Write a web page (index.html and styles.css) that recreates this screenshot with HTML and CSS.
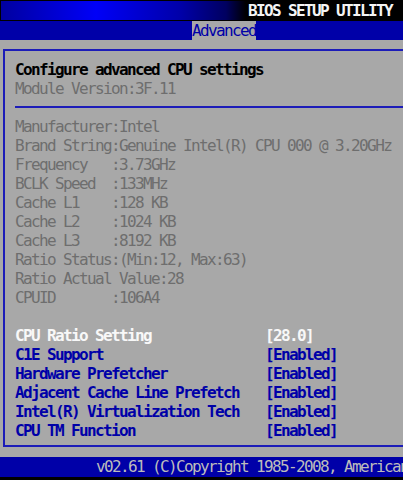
FILE: index.html
```html
<!DOCTYPE html>
<html lang="en">
<head>
  <meta charset="UTF-8" />
  <meta name="viewport" content="width=device-width, initial-scale=1.0"/>
  <title>BIOS Setup Utility – Advanced</title>
  <link rel="stylesheet" href="styles.css">
</head>
<body>

  <header class="title-bar">
    <span class="title">BIOS SETUP UTILITY</span>
  </header>

  <nav class="menu-bar">
    <span class="tab active">Advanced</span>
  </nav>

  <main class="content">
    <section class="panel">
      <div class="line heading">Configure advanced CPU settings</div>
      <div class="line info">Module Version:3F.11</div>

      <div class="divider"></div>

      <div class="line info">Manufacturer:Intel</div>
      <div class="line info">Brand String:Genuine Intel(R) CPU 000 @ 3.20GHz</div>
      <div class="line info">Frequency   :3.73GHz</div>
      <div class="line info">BCLK Speed  :133MHz</div>
      <div class="line info">Cache L1    :128 KB</div>
      <div class="line info">Cache L2    :1024 KB</div>
      <div class="line info">Cache L3    :8192 KB</div>
      <div class="line info">Ratio Status:(Min:12, Max:63)</div>
      <div class="line info">Ratio Actual Value:28</div>
      <div class="line info">CPUID       :106A4</div>

      <div class="spacer"></div>

      <div class="line setting selected">
        <span class="label">CPU Ratio Setting</span>
        <span class="value">[28.0]</span>
      </div>
      <div class="line setting">
        <span class="label">C1E Support</span>
        <span class="value">[Enabled]</span>
      </div>
      <div class="line setting">
        <span class="label">Hardware Prefetcher</span>
        <span class="value">[Enabled]</span>
      </div>
      <div class="line setting">
        <span class="label">Adjacent Cache Line Prefetch</span>
        <span class="value">[Enabled]</span>
      </div>
      <div class="line setting">
        <span class="label">Intel(R) Virtualization Tech</span>
        <span class="value">[Enabled]</span>
      </div>
      <div class="line setting">
        <span class="label">CPU TM Function</span>
        <span class="value">[Enabled]</span>
      </div>
    </section>
  </main>

  <footer class="status-bar">v02.61 (C)Copyright 1985-2008, American</footer>

</body>
</html>
```

FILE: styles.css
```css
body {
  margin: 0;
  width: 403px;
  height: 480px;
  overflow: hidden;
  display: flex;
  flex-direction: column;
  background: #000;
  font-family: 'DejaVu Sans Mono', 'Liberation Mono', monospace;
  font-size: 16px;
  line-height: 19px;
  letter-spacing: -1.63px;
}

.title-bar {
  height: 19px;
  border: 1px solid #000;
  border-right: none;
  display: flex;
  justify-content: flex-end;
  padding-right: 11px;
  background: linear-gradient(90deg, #0000a0 0px, #0000f8 95px, #0000a8 180px, #000060 225px, #000 245px);
}

.title {
  color: #f4f4f4;
  font-weight: bold;
}

.menu-bar {
  height: 19px;
  background: #0000a8;
  padding-left: 192px;
}

.tab {
  display: inline-block;
  width: 64px;
  height: 19px;
  color: #0000a8;
}

.tab.active {
  background: #a8a8a8;
}

.content {
  flex: 1;
  background: #a8a8a8;
  padding-top: 9px;
  padding-left: 3px;
}

.panel {
  border: 2px solid #1c1cb8;
  border-right: none;
  padding: 9px 0 5px 10px;
}

.line {
  height: 19px;
  white-space: pre;
}

.heading {
  color: #000;
  font-weight: bold;
}

.info {
  color: #6e6e6e;
}

.divider {
  height: 2px;
  margin: 8px 0 9px;
  background: #1c1cb8;
}

.spacer {
  height: 19px;
}

.setting {
  display: grid;
  grid-template-columns: 250px auto;
  color: #0000a8;
  font-weight: bold;
}

.setting.selected {
  color: #f8f8f8;
}

.status-bar {
  height: 20px;
  line-height: 20px;
  margin-bottom: 3px;
  padding-left: 96px;
  background: #0000a8;
  color: #bcbcbc;
  white-space: pre;
  overflow: hidden;
}
```
